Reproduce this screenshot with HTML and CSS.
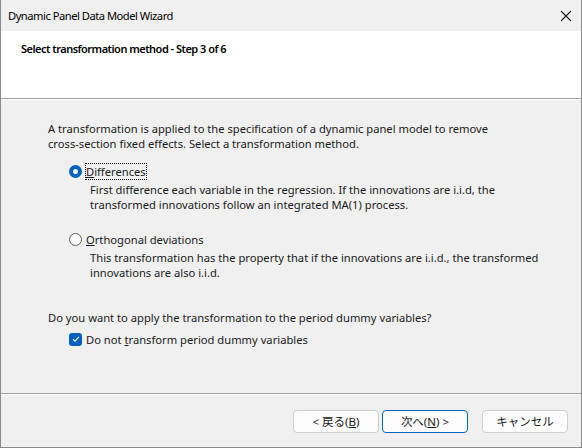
FILE: index.html
```html
<!DOCTYPE html>
<html lang="ja">
<head>
  <meta charset="UTF-8">
  <title>Dynamic Panel Data Model Wizard</title>
  <link rel="stylesheet" href="styles.css">
</head>
<body>
  <div class="window">
    <div class="titlebar">
      <span class="title">Dynamic Panel Data Model Wizard</span>
      <svg class="close" width="12" height="12" viewBox="0 0 12 12">
        <path d="M1 1 L11 11 M11 1 L1 11" stroke="#1a1a1a" stroke-width="1.1" fill="none"/>
      </svg>
    </div>

    <div class="header">
      <div class="step">Select transformation method - Step 3 of 6</div>
    </div>

    <div class="content">
      <p class="intro">A transformation is applied to the specification of a dynamic panel model to remove<br>cross-section fixed effects. Select a transformation method.</p>

      <div class="option">
        <label class="radio-row">
          <span class="radio checked"></span>
          <span class="label focus"><u>D</u>ifferences</span>
        </label>
        <p class="desc">First difference each variable in the regression. If the innovations are i.i.d, the<br>transformed innovations follow an integrated MA(1) process.</p>
      </div>

      <div class="option">
        <label class="radio-row">
          <span class="radio"></span>
          <span class="label"><u>O</u>rthogonal deviations</span>
        </label>
        <p class="desc">This transformation has the property that if the innovations are i.i.d., the transformed<br>innovations are also i.i.d.</p>
      </div>

      <p class="question">Do you want to apply the transformation to the period dummy variables?</p>
      <label class="check-row">
        <span class="checkbox">
          <svg width="12" height="12" viewBox="0 0 12 12">
            <path d="M3 6.2 L5 8.2 L9 3.8" stroke="#fff" stroke-width="1.2" fill="none"/>
          </svg>
        </span>
        <span class="label">Do not <u>t</u>ransform period dummy variables</span>
      </label>
    </div>

    <div class="footer">
      <button class="btn">&lt; 戻る(<u>B</u>)</button>
      <button class="btn default">次へ(<u>N</u>) &gt;</button>
      <button class="btn cancel">キャンセル</button>
    </div>
  </div>
</body>
</html>
```

FILE: styles.css
```css
body {
  margin: 0;
  font-family: "Noto Sans", "Noto Sans CJK JP", sans-serif;
  font-size: 11.2px;
  color: #1a1a1a;
  background: #f0f0f0;
}

.window {
  width: 582px;
  height: 448px;
  box-sizing: border-box;
  border: 1px solid #8a8a8a;
  border-top: none;
  display: flex;
  flex-direction: column;
  background: #f0f0f0;
}

/* タイトルバー */
.titlebar {
  height: 31px;
  display: flex;
  align-items: center;
  justify-content: space-between;
  padding: 0 9px 0 7px;
  background: #f0f0f0;
}
.title {
  color: #000;
  letter-spacing: -0.5px;
}

/* ステップ見出し（白帯） */
.header {
  height: 68px;
  background: #fff;
  border-bottom: 1px solid #a0a0a0;
  box-shadow: 0 1px 0 #fff;
  padding: 10px 20px;
  box-sizing: border-box;
}
.step {
  font-weight: 600;
  font-size: 11px;
  letter-spacing: -0.52px;
  color: #000;
}

.content {
  flex: 1;
  padding: 21px 47px 0;
  margin-top: 1px;
  border-bottom: 1px solid #a0a0a0;
  box-shadow: 0 1px 0 #fff;
  line-height: 15px;
  white-space: nowrap;
}
.content p {
  margin: 0;
}

.option {
  margin-top: 12px;
  padding-left: 21px;
}
.option + .option {
  margin-top: 19px;
}

.radio-row,
.check-row {
  display: flex;
  align-items: center;
  gap: 4px;
  height: 16px;
}

.radio {
  width: 11px;
  height: 11px;
  border: 1px solid #5a5a5a;
  border-radius: 50%;
  background: #fff;
  box-sizing: content-box;
}
.radio.checked {
  width: 5px;
  height: 5px;
  border: 4px solid #0061c2;
}

.label.focus {
  outline: 1px dotted #000;
  outline-offset: 0;
}

.desc {
  padding-left: 21px;
  margin-top: 3px !important;
}

.question {
  margin-top: 30px !important;
}

.check-row {
  margin-top: 6px;
  padding-left: 21px;
}
.checkbox {
  width: 13px;
  height: 13px;
  border-radius: 3px;
  background: #0061c2;
  display: flex;
  align-items: center;
  justify-content: center;
}

/* ボタン */
.footer {
  height: 52px;
  margin-top: 1px;
  display: flex;
  align-items: center;
  justify-content: flex-end;
  padding: 0 13px 0 0;
}
.btn {
  width: 86px;
  height: 23px;
  margin-left: 3px;
  font-family: "Noto Sans", "Noto Sans CJK JP", sans-serif;
  font-size: 11.5px;
  color: #1a1a1a;
  background: #fdfdfd;
  border: 1px solid #d0d0d0;
  border-radius: 4px;
  padding: 0;
}
.btn.default {
  border-color: #0067c0;
}
.btn.cancel {
  margin-left: 14px;
}
```
